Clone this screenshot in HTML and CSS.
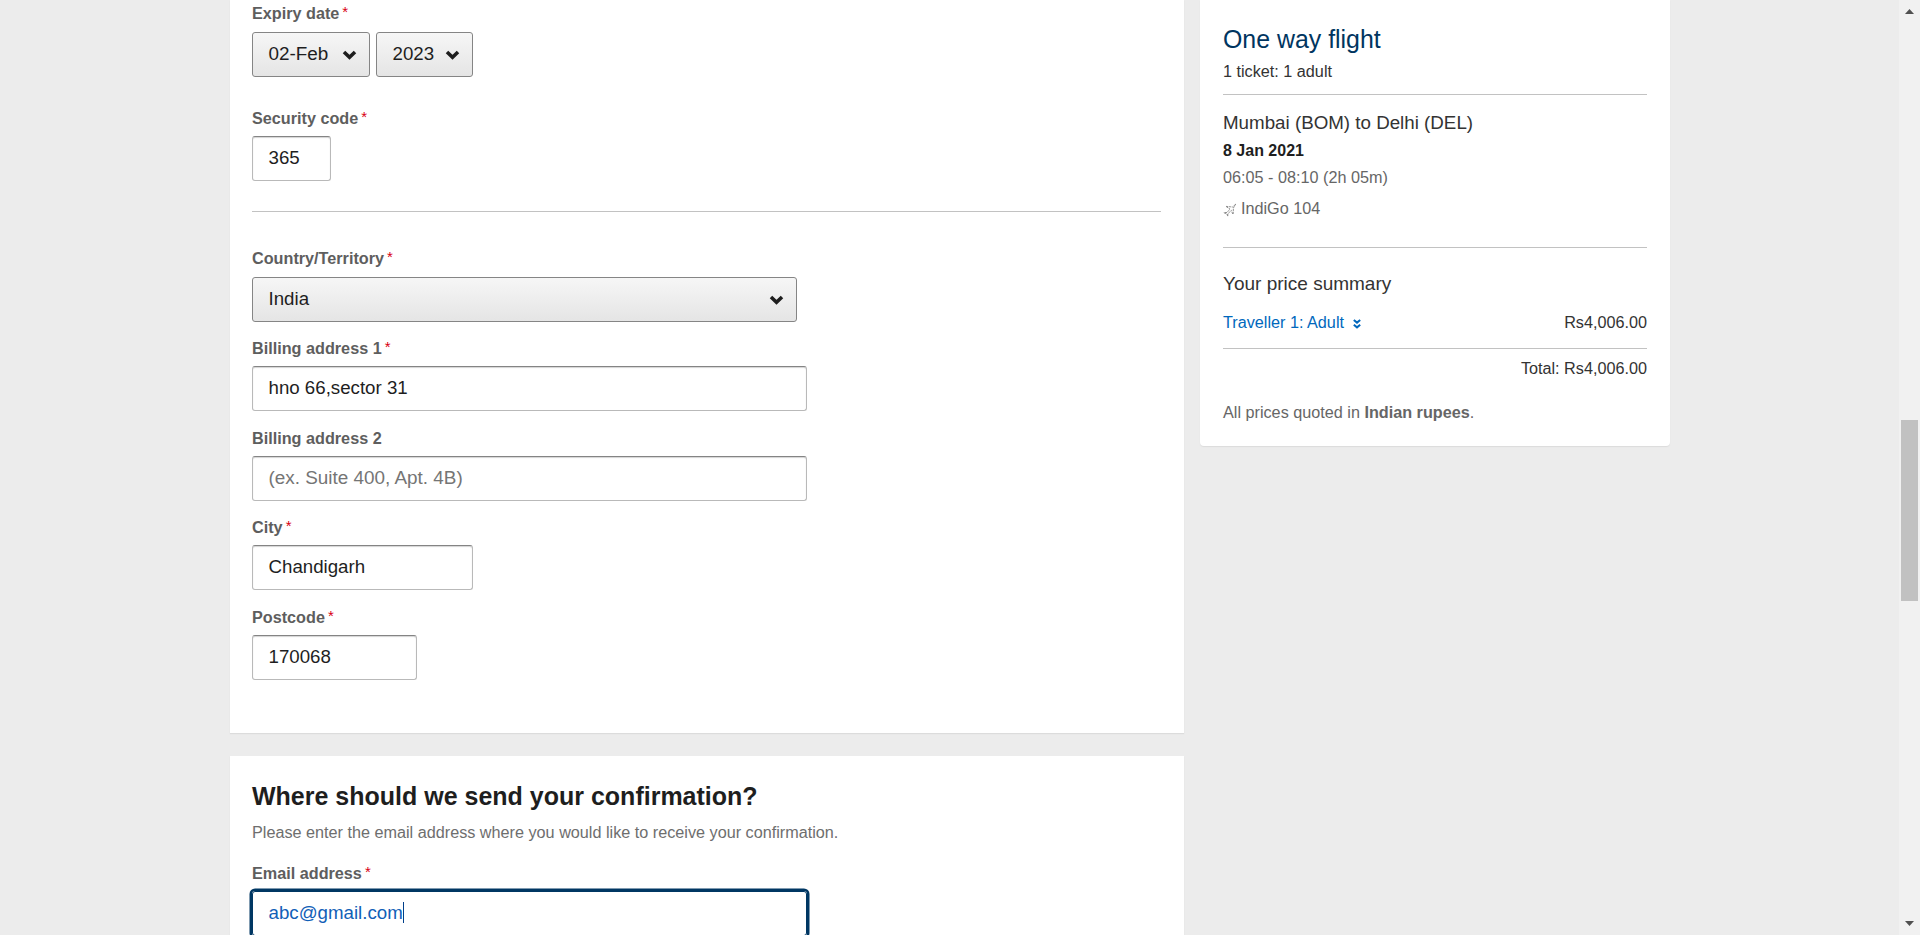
FILE: index.html
```html
<!DOCTYPE html>
<html lang="en">
<head>
<meta charset="utf-8">
<title>Payment details</title>
<link rel="stylesheet" href="styles.css">
</head>
<body>
<div class="page">
  <div class="columns">
    <main class="main">
      <section class="panel payment">
        <div class="label">Expiry date<span class="req">*</span></div>
        <div class="expiry">
          <div class="select month"><span class="t-month">02-Feb</span><svg class="chev" viewBox="0 0 15 10"><path d="M2 2l5.5 5.2L13 2"/></svg></div>
          <div class="select year"><span>2023</span><svg class="chev" viewBox="0 0 15 10"><path d="M2 2l5.5 5.2L13 2"/></svg></div>
        </div>
        <div class="label label-security">Security code<span class="req">*</span></div>
        <div class="input code">365</div>
        <hr class="rule">
        <div class="label label-country">Country/Territory<span class="req">*</span></div>
        <div class="select country"><span>India</span><svg class="chev" viewBox="0 0 15 10"><path d="M2 2l5.5 5.2L13 2"/></svg></div>
        <div class="label stacked">Billing address 1<span class="req">*</span></div>
        <div class="input wide">hno 66,sector 31</div>
        <div class="label stacked">Billing address 2</div>
        <div class="input wide placeholder">(ex. Suite 400, Apt. 4B)</div>
        <div class="label stacked">City<span class="req">*</span></div>
        <div class="input city">Chandigarh</div>
        <div class="label stacked">Postcode<span class="req">*</span></div>
        <div class="input postcode">170068</div>
      </section>
      <section class="panel confirm">
        <h2 class="title"><span>Where should we send your confirmation?</span></h2>
        <p class="intro"><span>Please enter the email address where you would like to receive your confirmation.</span></p>
        <div class="label label-email">Email address<span class="req">*</span></div>
        <div class="input wide focused"><span>abc@gmail.com</span><i class="caret"></i></div>
      </section>
    </main>
    <aside class="summary">
      <h2 class="trip"><span>One way flight</span></h2>
      <p class="tickets"><span>1 ticket: 1 adult</span></p>
      <div class="flight">
        <h3 class="route"><span>Mumbai (BOM) to Delhi (DEL)</span></h3>
        <p class="date"><span>8 Jan 2021</span></p>
        <p class="time"><span>06:05 - 08:10 (2h 05m)</span></p>
        <p class="carrier"><svg class="plane" viewBox="0 0 14 14"><path d="M12.7 1.2L9.5 4 3 3.4M3.4 3.8L7 6 4 9.5H.8M1 9.8L4 11l.8 2.6M4.8 13V10.8L8.4 7.4l1.4 4M10.2 11L10.4 5 12.7 1.2"/></svg><span>IndiGo 104</span></p>
      </div>
      <h3 class="price-title"><span>Your price summary</span></h3>
      <div class="price-row"><a class="traveller"><span>Traveller 1: Adult</span><svg class="double" viewBox="0 0 8 10"><path d="M.8 1L4 3.6 7.2 1M.8 5.8L4 8.4l3.2-2.6"/></svg></a><span>Rs4,006.00</span></div>
      <div class="total"><span>Total: Rs4,006.00</span></div>
      <p class="currency"><span>All prices quoted in <b>Indian rupees</b>.</span></p>
    </aside>
  </div>
  <div class="scrollbar">
    <svg class="arrow" viewBox="0 0 9 5"><path d="M0 5L4.5 0 9 5z"/></svg>
    <div class="track"><div class="thumb"></div></div>
    <svg class="arrow" viewBox="0 0 9 5"><path d="M0 0l4.5 5L9 0z"/></svg>
  </div>
</div>
</body>
</html>
```
FILE: styles.css
```css
* { box-sizing: border-box; }
body {
  margin: 0;
  height: 935px;
  overflow: hidden;
  background: #ececec;
  color: #1e1e1e;
  font: 16.22px/22px "Liberation Sans", Arial, sans-serif;
}
h2, h3, p { margin: 0; font-weight: normal; }
.page { display: flex; justify-content: space-between; height: 935px; overflow: hidden; }
.columns { display: flex; align-items: flex-start; gap: 16px; padding-left: 230px; }
.main { width: 954px; }
.panel { padding: 0 23px 0 22px; background: #fff; box-shadow: 0 1px 1px #dcdcdc; }
.payment { height: 733px; padding-top: 2px; margin-bottom: 23px; }
.label { height: 22px; color: #5e5e5e; font-weight: bold; white-space: nowrap; }
.req { margin-left: 3px; color: #d80012; font-size: 15px; line-height: 1; font-weight: normal; position: relative; top: -2px; }
.expiry { display: flex; gap: 6px; margin-top: 8px; }
.select, .input {
  display: flex;
  align-items: center;
  height: 45px;
  padding: 0 15px 2px 15.5px;
  border: 1px solid #b9b9b9;
  border-radius: 3px;
  font-size: 18.7px;
  white-space: nowrap;
}
.input { height: 44.8px; padding-bottom: 1px; border-top-color: #848484; box-shadow: inset 0 1px 1px #d4d4d4; }
.select { justify-content: space-between; padding-right: 12px; border-color: #858585; background: linear-gradient(#f6f6f6, #e5e5e5); }
.chev { width: 15px; height: 10px; margin-top: 2px; fill: none; stroke: #1e1e1e; stroke-width: 3.6; }
.month { width: 118px; font-size: 18.9px; }
.year { width: 97px; }
.label-security { margin-top: 30px; }
.code { width: 79px; margin-top: 7px; }
.rule { margin: 30.2px 0 0; border: 0; border-top: 1px solid #c2c2c2; }
.label-country { margin-top: 35px; }
.country { width: 545px; margin-top: 8px; padding-bottom: 1px; }
.stacked { margin: 15.8px 0 6.6px; height: 22.4px; }
.country + .stacked { margin-top: 15.2px; }
.wide { width: 555px; }
.placeholder { color: #757575; font-size: 18.9px; }
.city { width: 221px; }
.postcode { width: 165px; }
.confirm { height: 240px; padding-top: 26px; }
.title { font-size: 25px; font-weight: bold; line-height: 28px; }
.intro { margin-top: 11px; color: #6e6e6e; }
.label-email { margin-top: 19px; }
.focused { margin-top: 7px; border-color: #003763; box-shadow: 0 0 0 2.5px #003763; color: #1160b7; }
.caret { width: 1px; height: 21px; background: #003f8a; }
.summary { width: 470px; height: 446px; padding: 24px 23px 0; border-radius: 0 0 4px 4px; background: #fff; box-shadow: 0 1px 1px #dcdcdc; }
.trip { color: #00355f; font-size: 24.9px; line-height: 30px; }
.tickets { height: 41px; padding-top: 6px; border-bottom: 1px solid #c2c2c2; color: #333; }
.flight { height: 153px; padding-top: 17px; border-bottom: 1px solid #c2c2c2; }
.route, .price-title { color: #333; font-size: 18.75px; line-height: 22px; }
.date { margin-top: 6px; font-size: 16px; font-weight: bold; }
.time { margin-top: 4px; color: #666; }
.carrier { display: flex; align-items: center; gap: 4px; margin-top: 9px; color: #666; }
.plane { width: 14px; height: 14px; margin-top: 3px; fill: none; stroke: #777; stroke-width: .8; stroke-dasharray: 2.2 .7; }
.price-title { margin-top: 25px; font-size: 19px; }
.price-row { display: flex; justify-content: space-between; height: 54px; padding-top: 16px; border-bottom: 1px solid #c2c2c2; color: #333; }
.traveller { display: flex; align-items: center; height: 22px; gap: 9px; color: #0068bd; }
.double { width: 8px; height: 10px; margin-top: 3px; fill: none; stroke: #0068bd; stroke-width: 2; }
.total { padding-top: 8px; text-align: right; color: #333; }
.currency { margin-top: 22px; color: #666; }
.scrollbar { display: flex; flex-direction: column; align-items: center; width: 21px; height: 935px; padding: 9px 0; background: #f1f1f1; }
.arrow { width: 9px; height: 5px; flex: none; fill: #505050; }
.track { flex: 1; padding-top: 406px; }
.thumb { width: 17px; height: 181px; background: #c1c1c1; }
```
